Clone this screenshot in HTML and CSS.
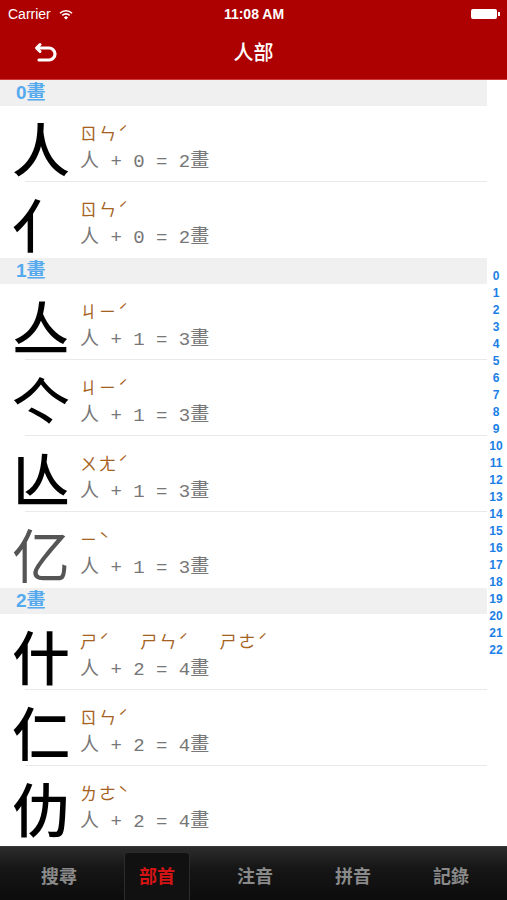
FILE: index.html
```html
<!DOCTYPE html>
<html lang="zh-Hant">
  <head>
    <meta charset="UTF-8" />
    <meta name="viewport" content="width=device-width, initial-scale=1" />
    <title>人部</title>
    <link rel="stylesheet" href="styles.css">
  </head>
  <body>
    <div class="topbar">
      <div class="status">
        <div class="carrier">
          Carrier
          <svg class="wifi" width="14" height="11" viewBox="0 0 14 11">
            <path d="M1 4.2a8.5 8.5 0 0 1 12 0" fill="none" stroke="#fff" stroke-width="1.6" />
            <path d="M3.3 6.4a5.2 5.2 0 0 1 7.4 0" fill="none" stroke="#fff" stroke-width="1.6" />
            <path d="M5.4 8.5a2.2 2.2 0 0 1 3.2 0L7 10.2z" fill="#fff" stroke="#fff" stroke-width="1" />
          </svg>
        </div>
        <div class="clock">11:08 AM</div>
        <div class="battery"><span class="cell"></span><span class="nub"></span></div>
      </div>
      <div class="navbar">
        <svg class="back" width="24" height="22" viewBox="0 0 24 22">
          <path d="M6 2.5 L2.5 6 L6 9.5" fill="none" stroke="#fff" stroke-width="3" stroke-linecap="round" stroke-linejoin="round" />
          <path d="M3.5 6 H15 a6 6 0 0 1 0 12 H5" fill="none" stroke="#fff" stroke-width="3.2" stroke-linecap="round" />
        </svg>
        <h1 class="title">人部</h1>
      </div>
    </div>

    <div class="content">
      <div class="list">
        <div class="section">0畫</div>
        <div class="row">
          <div class="glyph">人</div>
          <div class="info"><div class="zhuyin">ㄖㄣˊ</div><div class="calc">人 + 0 = 2畫</div></div>
        </div>
        <div class="row">
          <div class="glyph">亻</div>
          <div class="info"><div class="zhuyin">ㄖㄣˊ</div><div class="calc">人 + 0 = 2畫</div></div>
        </div>

        <div class="section">1畫</div>
        <div class="row">
          <div class="glyph">亼</div>
          <div class="info"><div class="zhuyin">ㄐㄧˊ</div><div class="calc">人 + 1 = 3畫</div></div>
        </div>
        <div class="row">
          <div class="glyph">亽</div>
          <div class="info"><div class="zhuyin">ㄐㄧˊ</div><div class="calc">人 + 1 = 3畫</div></div>
        </div>
        <div class="row">
          <div class="glyph">亾</div>
          <div class="info"><div class="zhuyin">ㄨㄤˊ</div><div class="calc">人 + 1 = 3畫</div></div>
        </div>
        <div class="row">
          <div class="glyph dim">亿</div>
          <div class="info"><div class="zhuyin">ㄧˋ</div><div class="calc">人 + 1 = 3畫</div></div>
        </div>

        <div class="section">2畫</div>
        <div class="row">
          <div class="glyph">什</div>
          <div class="info">
            <div class="zhuyin"><span class="reading">ㄕˊ</span><span class="reading">ㄕㄣˊ</span><span class="reading">ㄕㄜˊ</span></div>
            <div class="calc">人 + 2 = 4畫</div>
          </div>
        </div>
        <div class="row">
          <div class="glyph">仁</div>
          <div class="info"><div class="zhuyin">ㄖㄣˊ</div><div class="calc">人 + 2 = 4畫</div></div>
        </div>
        <div class="row">
          <div class="glyph">仂</div>
          <div class="info"><div class="zhuyin">ㄌㄜˋ</div><div class="calc">人 + 2 = 4畫</div></div>
        </div>
      </div>

      <div class="index">
        <span>0</span><span>1</span><span>2</span><span>3</span><span>4</span><span>5</span>
        <span>6</span><span>7</span><span>8</span><span>9</span><span>10</span><span>11</span>
        <span>12</span><span>13</span><span>14</span><span>15</span><span>16</span><span>17</span>
        <span>18</span><span>19</span><span>20</span><span>21</span><span>22</span>
      </div>
    </div>

    <div class="tabbar">
      <div class="tab">搜尋</div>
      <div class="tab active">部首</div>
      <div class="tab">注音</div>
      <div class="tab">拼音</div>
      <div class="tab">記錄</div>
    </div>
  </body>
</html>
```

FILE: styles.css
```css
* {
  box-sizing: border-box;
}
html,
body {
  margin: 0;
  padding: 0;
}
body {
  width: 507px;
  height: 900px;
  display: flex;
  flex-direction: column;
  overflow: hidden;
  background: #fff;
  font-family: "Liberation Sans", "Noto Sans CJK TC", sans-serif;
}
.topbar {
  background: #ad0000;
  border-bottom: 1px solid #d23a3a;
  color: #fff;
}
.status {
  height: 28px;
  display: flex;
  align-items: center;
  justify-content: space-between;
  padding: 0 7px 0 8px;
  font-size: 14px;
}
.carrier {
  display: flex;
  align-items: center;
  gap: 8px;
  width: 100px;
}
.clock {
  font-weight: bold;
  font-size: 14px;
}
.battery {
  width: 100px;
  display: flex;
  justify-content: flex-end;
  align-items: center;
}
.battery .cell {
  width: 26px;
  height: 10px;
  background: #fff;
  border-radius: 2px;
}
.battery .nub {
  width: 2px;
  height: 4px;
  margin-left: 1px;
  background: #fff;
}
.navbar {
  height: 51px;
  display: flex;
  align-items: center;
  justify-content: center;
  position: relative;
}
.back {
  position: absolute;
  left: 34px;
  top: 14px;
}
.title {
  margin: 0 0 4px;
  font-size: 20px;
  font-weight: 500;
  font-family: "Noto Sans CJK TC", sans-serif;
}
.content {
  flex: 1;
  display: flex;
  overflow: hidden;
  min-height: 0;
}
.list {
  width: 487px;
  flex: none;
}
.section {
  height: 26px;
  line-height: 26px;
  background: #f0f0f0;
  color: #55aaee;
  font-weight: bold;
  font-size: 19px;
  padding-left: 16px;
}
.row {
  height: 76px;
  display: flex;
  position: relative;
}
.row + .row::before {
  content: "";
  position: absolute;
  left: 25px;
  right: 0;
  top: -1px;
  height: 1px;
  background: #e9e9e9;
}
.glyph {
  width: 80px;
  height: 76px;
  padding: 6px 0 0 12px;
  font-family: "Noto Sans CJK TC", sans-serif;
  font-weight: 500;
  font-size: 58px;
  line-height: 70px;
  color: #000;
}
.glyph.dim {
  color: #555;
  font-weight: 400;
}
.info {
  padding-top: 16px;
}
.zhuyin {
  font-family: "Noto Sans CJK TC", sans-serif;
  font-size: 17px;
  line-height: 22px;
  letter-spacing: 2px;
  color: #a5621e;
}
.reading + .reading {
  margin-left: 29px;
}
.calc {
  margin-top: 4px;
  font-family: "Liberation Mono", "Noto Sans CJK TC", monospace;
  font-size: 19px;
  line-height: 28px;
  color: #777;
}
.index {
  flex: 1;
  display: flex;
  flex-direction: column;
  justify-content: center;
  align-items: center;
  padding-right: 2px;
  color: #1b7fe6;
  font-weight: bold;
  font-size: 12px;
  line-height: 17px;
}
.tabbar {
  height: 54px;
  flex: none;
  display: flex;
  padding: 5px 7px 0 10px;
  background: linear-gradient(#2c2c2c, #161616 40%, #0c0c0c);
  border-top: 1px solid #3a3a3a;
}
.tab {
  flex: 1;
  display: flex;
  align-items: center;
  justify-content: center;
  padding-bottom: 3px;
  color: #8a8a8a;
  font-family: "Noto Sans CJK TC", sans-serif;
  font-weight: bold;
  font-size: 18px;
}
.tab.active {
  flex: none;
  width: 66px;
  margin: 0 16px;
  color: #d41414;
  background: #111;
  border: 1px solid #2c2c2c;
  border-bottom: none;
  border-radius: 4px 4px 0 0;
}
```
